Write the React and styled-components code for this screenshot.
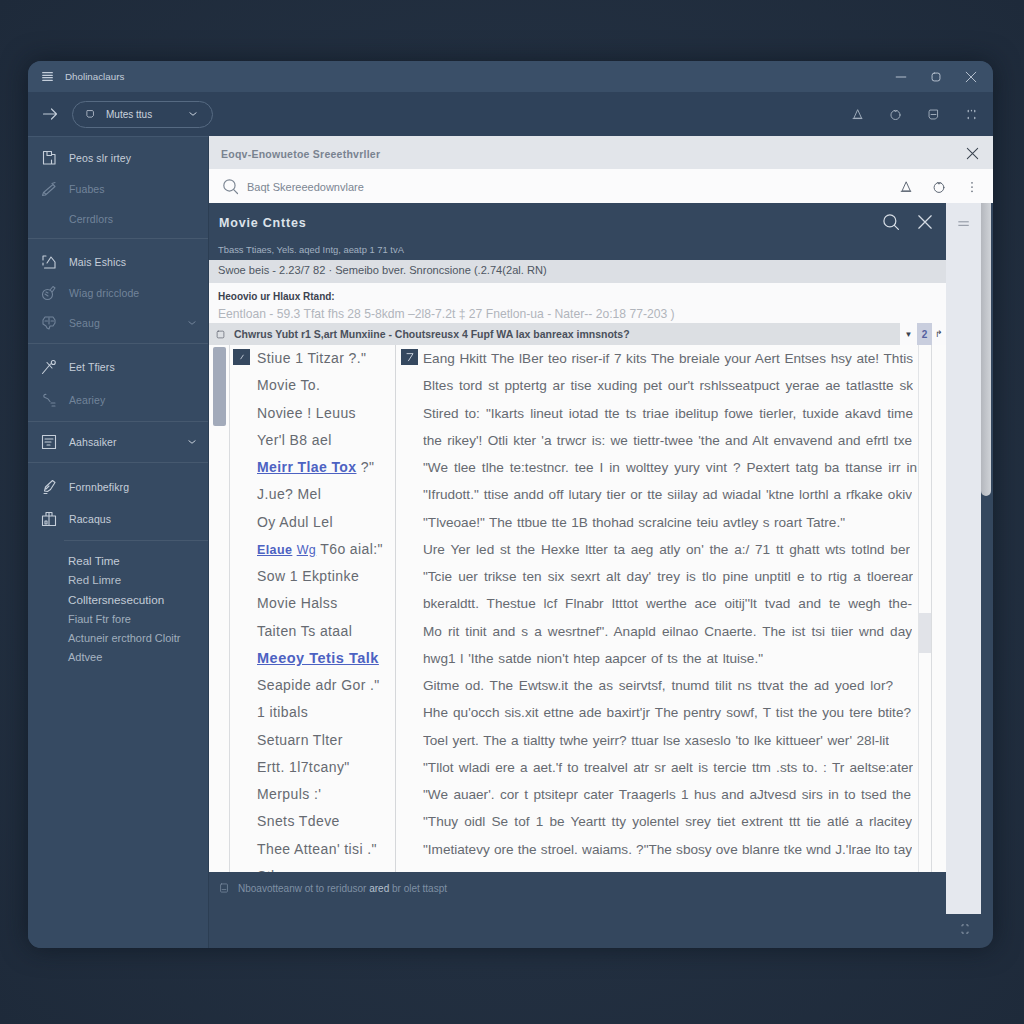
import React from "react";
import styled, { createGlobalStyle } from "styled-components";

const Global = createGlobalStyle`
  html, body { margin: 0; padding: 0; background: #1f2b3b; }
  * { box-sizing: border-box; }
  #root { font-family: "Liberation Sans", Arial, sans-serif; }
`;

const Page = styled.div`
  width: 1024px;
  height: 1024px;
  padding: 61px 31px 76px 28px;
  background: radial-gradient(ellipse at 50% 50%, #2a394c 0%, #222f40 62%, #1e2a3a 100%);
`;
const Window = styled.div`
  width: 965px;
  height: 887px;
  border-radius: 13px;
  overflow: hidden;
  display: flex;
  flex-direction: column;
  background: #34475e;
  box-shadow: 0 0 26px rgba(10, 18, 28, 0.65);
`;
const TitleBar = styled.div`
  height: 31px;
  flex: none;
  display: flex;
  align-items: center;
  padding: 0 15px 0 14px;
  background: #3a4f68;
  color: #c4cedb;
  font-size: 9.8px;
`;
const TitleText = styled.span`
  margin-left: 12px;
  flex: 1;
`;
const WinControls = styled.div`
  display: flex;
  gap: 21px;
  color: #b9c4d1;
`;
const Toolbar = styled.div`
  height: 44px;
  flex: none;
  display: flex;
  align-items: center;
  padding: 0 15px 0 14px;
  background: #2f425a;
  color: #c2ccd8;
`;
const Pill = styled.div`
  width: 141px;
  height: 27px;
  margin-left: 14px;
  display: flex;
  align-items: center;
  padding: 0 14px 0 12px;
  border: 1px solid #566a82;
  border-radius: 14px;
  font-size: 10px;
  color: #c9d2dd;
`;
const PillText = styled.span`
  margin-left: 11px;
  flex: 1;
`;
const ToolIcons = styled.div`
  margin-left: auto;
  display: flex;
  gap: ${(p) => p.$gap || 25}px;
  align-items: center;
  color: ${(p) => p.$color || "#aab6c4"};
`;
const Body = styled.div`
  flex: 1;
  min-height: 0;
  display: flex;
`;
const Sidebar = styled.div`
  width: 181px;
  flex: none;
  background: #364a62;
  border-right: 1px solid #2c3e53;
  border-top: 1px solid #43576f;
  display: flex;
  flex-direction: column;
`;
const Group = styled.div`
  height: ${(p) => p.$h}px;
  flex: none;
  padding-top: ${(p) => p.$pt}px;
  border-bottom: ${(p) => (p.$plain ? "none" : "1px solid #46596f")};
`;
const Item = styled.div`
  height: ${(p) => p.$h}px;
  display: flex;
  align-items: center;
  padding: 0 11px 0 13px;
  font-size: 10.5px;
  letter-spacing: 0.1px;
  color: ${(p) => (p.$dim ? "#72849a" : "#c6cfda")};
`;
const ItemLabel = styled.span`
  margin-left: 12px;
  flex: 1;
  white-space: nowrap;
`;
const SubList = styled.div`
  margin-left: 36px;
  border-top: 1px solid #46596f;
  padding-top: 11px;
  display: flex;
  flex-direction: column;
`;
const SubItem = styled.div`
  height: 19.2px;
  line-height: 19.2px;
  margin-left: 4px;
  white-space: nowrap;
  font-size: ${(p) => p.$s}px;
  color: ${(p) => p.$c};
`;
const Main = styled.div`
  flex: 1;
  min-width: 0;
  display: flex;
  flex-direction: column;
`;
const DocHead = styled.div`
  height: 33px;
  flex: none;
  display: flex;
  align-items: center;
  justify-content: space-between;
  padding: 2px 13px 0 12px;
  background: #e2e5ea;
  color: #5f6b7a;
  font-size: 10.5px;
  letter-spacing: 0.25px;
  font-weight: 700;
`;
const DocHeadTitle = styled.span`
  opacity: 0.8;
`;
const DocHeadClose = styled.span`
  display: flex;
  color: #3a4350;
`;
const DocSearch = styled.div`
  height: 34px;
  flex: none;
  display: flex;
  align-items: center;
  padding: 1px 14px 0 13px;
  background: #fbfbfc;
  color: #7c8693;
  font-size: 11px;
`;
const DocSearchText = styled.span`
  margin-left: 8px;
`;
const Content = styled.div`
  flex: 1;
  min-height: 0;
  display: flex;
`;
const Panel = styled.div`
  width: 737px;
  flex: none;
  display: flex;
  flex-direction: column;
`;
const MovieHead = styled.div`
  height: 57px;
  flex: none;
  background: #34475e;
  position: relative;
  padding: 13px 9px 0 10px;
`;
const MovieTitle = styled.div`
  font-size: 12.5px;
  font-weight: 700;
  letter-spacing: 0.8px;
  color: #dde3ea;
  line-height: 15px;
`;
const MovieSub = styled.div`
  margin-top: 13px;
  margin-left: -1px;
  font-size: 9.4px;
  color: #a2b1c1;
  line-height: 11px;
`;
const HeadIcons = styled.div`
  position: absolute;
  top: 10px;
  right: 12px;
  display: flex;
  gap: 16px;
  color: #d5dce4;
`;
const Stats = styled.div`
  height: 23px;
  flex: none;
  display: flex;
  align-items: center;
  padding: 0 0 3px 9px;
  background: #dcdfe4;
  color: #4e5662;
  font-size: 11.1px;
`;
const Info = styled.div`
  height: 40px;
  flex: none;
  padding: 8px 0 0 9px;
  background: #fafafb;
`;
const InfoTitle = styled.div`
  font-size: 10px;
  font-weight: 700;
  color: #3c4350;
  line-height: 12px;
`;
const InfoSub = styled.div`
  margin-top: 4px;
  font-size: 12.15px;
  color: #b1b5bc;
  line-height: 15px;
  white-space: nowrap;
`;
const TableHead = styled.div`
  height: 22px;
  flex: none;
  display: flex;
  align-items: stretch;
  background: #fafafb;
`;
const HeadBar = styled.div`
  width: 691px;
  display: flex;
  align-items: center;
  padding-left: 7px;
  background: #dcdfe3;
  color: #4a505b;
  font-size: 10.5px;
  font-weight: 700;
  white-space: nowrap;
`;
const HeadBarText = styled.span`
  margin-left: 9px;
`;
const HeadCaret = styled.div`
  width: 17px;
  display: flex;
  align-items: center;
  justify-content: center;
  font-size: 8px;
  color: #3c4350;
`;
const HeadBadge = styled.div`
  width: 15px;
  display: flex;
  align-items: center;
  justify-content: center;
  background: #c9cede;
  color: #5460a0;
  font-size: 10px;
  font-weight: 700;
`;
const HeadArrow = styled.div`
  flex: 1;
  display: flex;
  align-items: center;
  justify-content: center;
  color: #3c4350;
  font-size: 9px;
`;
const TableBody = styled.div`
  flex: 1;
  min-height: 0;
  display: flex;
  background: #fbfbfb;
  overflow: hidden;
`;
const Rail = styled.div`
  width: 20px;
  flex: none;
  padding: 2px 3px 0 4px;
`;
const RailThumb = styled.div`
  width: 13px;
  height: 79px;
  border-radius: 2px;
  background: #a2aaba;
`;
const TitleCol = styled.div`
  width: 167px;
  flex: none;
  position: relative;
  padding: 0 0 0 27px;
  border-left: 1px solid #dadcdf;
  border-right: 1px solid #d5d7da;
`;
const TextCol = styled.div`
  width: 522px;
  flex: none;
  position: relative;
  padding: 0 0 0 27px;
`;
const Marker = styled.div`
  position: absolute;
  top: 4px;
  left: ${(p) => p.$l}px;
  width: 17px;
  height: 16px;
  display: flex;
  align-items: center;
  justify-content: center;
  background: #35485f;
  color: #d6dde6;
`;
const Line = styled.div`
  height: 27.25px;
  line-height: 27.25px;
  white-space: nowrap;
  color: #666a71;
`;
const TitleLine = styled(Line)`
  font-size: 14px;
  letter-spacing: 0.4px;
`;
const BodyLine = styled(Line)`
  width: ${(p) => p.$w}px;
  font-size: 13.6px;
  text-align: justify;
  text-align-last: justify;
  white-space: normal;
  overflow: hidden;
`;
const Link = styled.a`
  color: #4d62c2;
  font-weight: ${(p) => p.$weight || 700};
  font-size: ${(p) => p.$s || 14}px;
  letter-spacing: ${(p) => p.$ls || 0.4}px;
  text-decoration: underline;
`;
const ThinScroll = styled.div`
  width: 14px;
  flex: none;
  border-left: 1px solid #e2e4e7;
  border-right: 1px solid #dadcdf;
  padding-top: 268px;
`;
const ThinThumb = styled.div`
  height: 40px;
  background: #e1e3e8;
`;
const Footer = styled.div`
  flex: none;
  height: 76px;
  background: #34475e;
  display: flex;
  align-items: flex-start;
  padding: 11px 0 0 10px;
  color: #7f90a4;
  font-size: 10px;
  white-space: nowrap;
`;
const FooterText = styled.span`
  margin-left: 9px;
  line-height: 12px;
  b { font-weight: 400; color: #b4c0cd; }
`;
const Strip = styled.div`
  width: 35px;
  height: 711px;
  flex: none;
  background: #e5e8ee;
  display: flex;
  justify-content: center;
  padding-top: 14px;
  color: #7c8491;
`;
const MainScroll = styled.div`
  width: 10px;
  height: 293px;
  flex: none;
  border-radius: 0 0 5px 5px;
  background: linear-gradient(90deg, #b4b7bd, #d0d3d8);
`;
const RightCol = styled.div`
  position: relative;
  flex: 1;
`;
const CornerIcon = styled.div`
  position: absolute;
  left: -22px;
  top: 718px;
  color: #a3afbd;
`;

const I = ({ s = 16, w = 1.1, children, vb = 16 }) => (
  <svg width={s} height={s} viewBox={`0 0 ${vb} ${vb}`} fill="none" stroke="currentColor" strokeWidth={w} strokeLinecap="round" strokeLinejoin="round" style={{ flex: "none" }}>
    {children}
  </svg>
);
const X = ({ s = 14, w = 1.2 }) => <I s={s} w={w}><path d="M2.5 2.5l11 11M13.5 2.5l-11 11" /></I>;
const Search = ({ s = 16, w = 1.2 }) => <I s={s} w={w}><circle cx="7" cy="7" r="5.3" /><path d="M11 11l3.6 3.6" /></I>;
const Bell = ({ s = 14 }) => <I s={s} w={1.1}><path d="M8 2.5L3.5 12.5h9zM2.5 13h11" /></I>;
const Round = ({ s = 14 }) => <I s={s} w={1.1}><circle cx="8" cy="8.6" r="5.6" /><path d="M6.5 3l1.5 1.8L9.8 3" /></I>;
const Chev = ({ s = 10 }) => <I s={s} w={1.6}><path d="M3 6l5 4 5-4" /></I>;

const Icons = {
  doc: <I><path d="M2.5 1.5h8v3h3.5v9.5H2.5zM6 1.5v4h4.5M10.5 10v4" /></I>,
  pen: <I><path d="M1.5 14.5l1-3 9.5-8 2 2-9.5 8.5zM3 11.5l2 2" /><path d="M11 2.5l3-1" /></I>,
  crop: <I><path d="M5 2H2v4M2 9v2M3.5 14H14V8L10 3 6 9" /></I>,
  tag: <I><circle cx="6.5" cy="9.5" r="5" /><path d="M9 5l3-3.5M12 1.5l2 1.5-2.5 3.5M4 9l3 2M5 7l2 1" /></I>,
  brain: <I><path d="M4 2h8l2 3v3l-2 3H9l-1 3-2-1-1-2-3-2V5zM8 3v6M4 6h2.5M10 6h2.5" /></I>,
  wand: <I><path d="M1.5 14.5L9.5 5M6 3.5l5 5.5" /><circle cx="12.3" cy="3.5" r="2" /></I>,
  route: <I><path d="M5 2.5C2.5 2 2 5 4 5.5s4 2 5 4M10 11h4M14 14h-3" /></I>,
  board: <I><path d="M1.5 1.5h13v13h-13zM4 5h8M4 8h6M6 11h3" /></I>,
  quill: <I><path d="M3 14.5h3M3.5 12l1-4 7-6.5 2.5 2-4.5 7-3 2zM5 10l3-3" /></I>,
  gift: <I><path d="M1.5 5h13v9.5h-13zM5 5V1.5h6V5M8 1.5v13M4 10h2v3H4z" /></I>,
};

const SideItem = ({ h, icon, label, dim, chev }) => (
  <Item $h={h} $dim={dim}>
    {icon ? Icons[icon] : <I><g /></I>}
    <ItemLabel>{label}</ItemLabel>
    {chev && <Chev />}
  </Item>
);

const titles = [
  'Stiue 1 Titzar ?."', "Movie To.", "Noviee ! Leuus", "Yer'l B8 ael", null,
  "J.ue? Mel", "Oy Adul Lel", null, "Sow 1 Ekptinke", "Movie Halss", "Taiten Ts ataal", null,
  'Seapide adr Gor ."', "1 itibals", "Setuarn Tlter", 'Ertt. 1l7tcany"', "Merpuls :'", "Snets Tdeve", 'Thee Attean\' tisi ."', "Stbs",
];
const links = {
  4: <><Link>Meirr Tlae Tox</Link> ?"</>,
  7: <><Link $s={12.5} $ls={0}>Elaue</Link> <Link $s={12.5} $ls={0} $weight={400}>Wg</Link> T6o aial:"</>,
  11: <Link $s={14.5} $ls={0.5}>Meeoy Tetis Talk</Link>,
};
const lines = [
  ["Eang Hkitt The lBer teo riser-if 7 kits The breiale your Aert Entses hsy ate! Thtis", 490],
  ["Bltes tord st pptertg ar tise xuding pet our't rshlsseatpuct yerae ae tatlastte sk", 490],
  ['Stired to: "Ikarts lineut iotad tte ts triae ibelitup fowe tierler, tuxide akavd time', 490],
  ["the rikey'! Otli kter 'a trwcr is: we tiettr-twee 'the and Alt envavend and efrtl txe", 489],
  ['"We tlee tlhe te:testncr. tee I in wolttey yury vint ? Pextert tatg ba ttanse irr in', 494],
  ['"Ifrudott." ttise andd off lutary tier or tte siilay ad wiadal \'ktne lorthl a rfkake okiv', 489],
  ['"Tlveoae!" The ttbue tte 1B thohad scralcine teiu avtley s roart Tatre."', 422],
  ["Ure Yer led st the Hexke ltter ta aeg atly on' the a:/ 71 tt ghatt wts totlnd ber", 487],
  ['"Tcie uer trikse ten six sexrt alt day\' trey is tlo pine unptitl e to rtig a tloerear', 490],
  ["bkeraldtt. Thestue lcf Flnabr Itttot werthe ace oitij''lt tvad and te wegh the-", 489],
  ["Mo rit tinit and s a wesrtnef''. Anapld eilnao Cnaerte. The ist tsi tiier wnd day", 489],
  ["hwg1 l 'Ithe satde nion't htep aapcer of ts the at ltuise.\"", 340],
  ["Gitme od. The Ewtsw.it the as seirvtsf, tnumd tilit ns ttvat the ad yoed lor?", 470],
  ["Hhe qu'occh sis.xit ettne ade baxirt'jr The pentry sowf, T tist the you tere btite?", 488],
  ["Toel yert. The a tialtty twhe yeirr? ttuar lse xaseslo 'to lke kittueer' wer' 28l-lit", 466],
  ['"Tllot wladi ere a aet.\'f to trealvel atr sr aelt is tercie ttm .sts to. : Tr aeltse:ater', 490],
  ['"We auaer\'. cor t ptsitepr cater Traagerls 1 hus and aJtvesd sirs in to tsed the', 488],
  ['"Thuy oidl Se tof 1 be Yeartt tty yolentel srey tiet extrent ttt tie atlé a rlacitey', 489],
  ['"Imetiatevy ore the stroel. waiams. ?"The sbosy ove blanre tke wnd J.\'lrae lto tay', 489],
  ['"Ttoe ald the ttreet tur a wan the tend of day', 300],
];

const sub = [
  ["Real Time", 11.5, "#c3ccd7"],
  ["Red Limre", 11.5, "#b6c0cc"],
  ["Colltersnesecution", 11.7, "#c3ccd7"],
  ["Fiaut Ftr fore", 11, "#a0aebd"],
  ["Actuneir ercthord Cloitr", 11, "#a0aebd"],
  ["Adtvee", 11, "#a8b5c3"],
];

export default function App() {
  return (
    <>
      <Global />
      <Page>
        <Window>
          <TitleBar>
            <I s={11} w={1.8}><path d="M1 2.5h14M1 6.2h14M1 9.8h14M1 13.5h14" /></I>
            <TitleText>Dholinaclaurs</TitleText>
            <WinControls>
              <I s={14}><path d="M2.5 8h11" /></I>
              <I s={14}><rect x="3.5" y="3.5" width="9" height="9" rx="2.5" /></I>
              <X s={14} w={1.1} />
            </WinControls>
          </TitleBar>
          <Toolbar>
            <I s={16} w={1.2}><path d="M1.5 8h13M9.5 3l5 5-5 5" /></I>
            <Pill>
              <I s={10} w={1.2}><path d="M4 2.5h8l1.5 2v6L11 13H5L3 10.5v-6z" /></I>
              <PillText>Mutes ttus</PillText>
              <Chev />
            </Pill>
            <ToolIcons>
              <Bell s={13} />
              <Round s={13} />
              <I s={13}><path d="M4 2.5h9V11l-2.5 2.5h-6L2.5 11V5z" /><path d="M5 8h6" /></I>
              <I s={13} w={1.6}><path d="M4 3v1.5M12 3v1.5M8 3v.5M4 11.5V13M12 11.5V13" /></I>
            </ToolIcons>
          </Toolbar>
          <Body>
            <Sidebar>
              <Group $h={102} $pt={6}>
                <SideItem h={30.5} icon="doc" label="Peos slr irtey" />
                <SideItem h={30.5} icon="pen" label="Fuabes" dim />
                <SideItem h={30.5} label="Cerrdlors" dim />
              </Group>
              <Group $h={105} $pt={8}>
                <SideItem h={30.5} icon="crop" label="Mais Eshics" />
                <SideItem h={30.5} icon="tag" label="Wiag dricclode" dim />
                <SideItem h={30.5} icon="brain" label="Seaug" dim chev />
              </Group>
              <Group $h={78} $pt={6}>
                <SideItem h={33} icon="wand" label="Eet Tfiers" />
                <SideItem h={33} icon="route" label="Aeariey" dim />
              </Group>
              <Group $h={41} $pt={0}>
                <SideItem h={40} icon="board" label="Aahsaiker" chev />
              </Group>
              <Group $h={77} $pt={8} $plain>
                <SideItem h={32} icon="quill" label="Fornnbefikrg" />
                <SideItem h={32} icon="gift" label="Racaqus" />
              </Group>
              <SubList>
                {sub.map(([t, s, c]) => (
                  <SubItem key={t} $s={s} $c={c}>{t}</SubItem>
                ))}
              </SubList>
            </Sidebar>
            <Main>
              <DocHead>
                <DocHeadTitle>Eoqv-Enowuetoe Sreeethvrller</DocHeadTitle>
                <DocHeadClose><X s={15} w={1.1} /></DocHeadClose>
              </DocHead>
              <DocSearch>
                <Search s={17} w={1.1} />
                <DocSearchText>Baqt Skereeedownvlare</DocSearchText>
                <ToolIcons $gap={19} $color="#5a6370">
                  <Bell s={14} />
                  <Round s={14} />
                  <I s={14} w={1.7}><path d="M8 3v.3M8 8v.3M8 12.8v.3" /></I>
                </ToolIcons>
              </DocSearch>
              <Content>
                <Panel>
                  <MovieHead>
                    <MovieTitle>Movie Cnttes</MovieTitle>
                    <MovieSub>Tbass Ttiaes, Yels. aqed Intg, aeatp 1 71 tvA</MovieSub>
                    <HeadIcons>
                      <Search s={18} w={1.1} />
                      <X s={18} w={1.1} />
                    </HeadIcons>
                  </MovieHead>
                  <Stats>Swoe beis - 2.23/7 82 · Semeibo bver. Snroncsione (.2.74(2al. RN)</Stats>
                  <Info>
                    <InfoTitle>Heoovio ur Hlaux Rtand:</InfoTitle>
                    <InfoSub>Eentloan - 59.3 Tfat fhs 28 5-8kdm –2l8-7.2t ‡ 27 Fnetlon-ua - Nater-- 2o:18 77-203 )</InfoSub>
                  </Info>
                  <TableHead>
                    <HeadBar>
                      <I s={9} w={1.1}><rect x="2" y="2" width="12" height="12" rx="2" /></I>
                      <HeadBarText>Chwrus Yubt r1 S,art Munxiine - Choutsreusx 4 Fupf WA lax banreax imnsnots?</HeadBarText>
                    </HeadBar>
                    <HeadCaret>▼</HeadCaret>
                    <HeadBadge>2</HeadBadge>
                    <HeadArrow>↱</HeadArrow>
                  </TableHead>
                  <TableBody>
                    <Rail><RailThumb /></Rail>
                    <TitleCol>
                      <Marker $l={3}><I s={10} w={1.3}><path d="M6 11l4-6" /></I></Marker>
                      {titles.map((t, i) => (
                        <TitleLine key={i}>{links[i] || t}</TitleLine>
                      ))}
                    </TitleCol>
                    <TextCol>
                      <Marker $l={5}><I s={12} w={1.2}><path d="M4 3.5h8L6 13" /></I></Marker>
                      {lines.map(([t, w], i) => (
                        <BodyLine key={i} $w={w}>{t}</BodyLine>
                      ))}
                    </TextCol>
                    <ThinScroll><ThinThumb /></ThinScroll>
                  </TableBody>
                  <Footer>
                    <I s={10} w={1.1}><rect x="2.5" y="1.5" width="11" height="13" rx="1.5" /><path d="M5 10.5h6" /></I>
                    <FooterText>Nboavotteanw ot to reridusor <b>ared</b> br olet ttaspt</FooterText>
                  </Footer>
                </Panel>
                <Strip>
                  <I s={14} w={1}><path d="M2 5.5h11M2 9.5h11" /></I>
                </Strip>
                <RightCol>
                  <MainScroll />
                  <CornerIcon>
                    <I s={12} w={1}><path d="M4 4V2.5h2M12 4V2.5h-2M4 12v1.5h2M12 12v1.5h-2" /></I>
                  </CornerIcon>
                </RightCol>
              </Content>
            </Main>
          </Body>
        </Window>
      </Page>
    </>
  );
}
